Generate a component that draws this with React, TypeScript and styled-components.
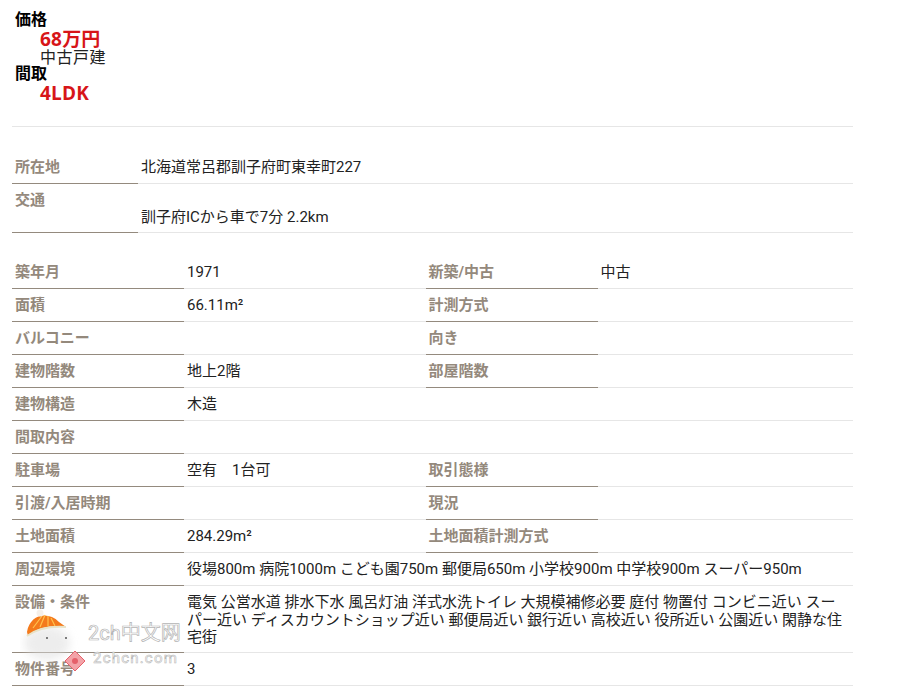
import React from 'react';
import styled, { createGlobalStyle } from 'styled-components';

const Global = createGlobalStyle`
  html, body { margin: 0; padding: 0; background: #fff; }
  body { font-family: Roboto, "Noto Sans CJK JP", sans-serif; font-size: 15px; color: #222; overflow: hidden; }
`;
const Page = styled.div`
  position: relative; width: 908px; height: 693px; overflow: hidden; padding: 0 55px 0 12px; box-sizing: border-box;
`;
const Summary = styled.dl`
  margin: 0; padding: 11px 0 0 3px; border-bottom: 1px solid #e6e6e6; height: 127px; box-sizing: border-box;
`;
const Term = styled.dt<{ $gap?: number }>`
  font-size: 16px; font-weight: 700; line-height: 18px; color: #000; margin-top: ${p => p.$gap ?? 0}px;
`;
const Big = styled.dd`
  margin: 0 0 0 25px; font-family: "Open Sans", "Noto Sans CJK JP", sans-serif; font-size: 19px; font-weight: 700;
  line-height: 21px; color: #d71518; letter-spacing: 0.2px;
`;
const Kind = styled.div`
  margin: -2px 0 0 25px; font-size: 16px; line-height: 19px; color: #222; letter-spacing: 0.5px;
`;
const Section = styled.div<{ $top: number }>`
  margin-top: ${p => p.$top}px;
`;
const Row = styled.div<{ $h: number }>`
  display: flex; height: ${p => p.$h}px; box-sizing: border-box; border-bottom: 1px solid #e6e6e6;
`;
const Label = styled.div<{ $w: number }>`
  width: ${p => p.$w}px; flex: none; box-sizing: border-box; height: calc(100% + 1px);
  border-bottom: 1px solid #948a7e; padding: 5.5px 0 0 3px;
  font-size: 15px; line-height: 20px; font-weight: 700; color: #94897c; white-space: nowrap;
`;
const Value = styled.div<{ $w?: number; $pad?: number }>`
  ${p => (p.$w ? `width: ${p.$w}px; flex: none;` : 'flex: 1;')}
  box-sizing: border-box; padding: ${p => p.$pad ?? 5.5}px 0 0 3px; font-size: 15px; line-height: 20px; color: #222; white-space: pre-wrap;
`;
const Wrapped = styled(Value)`
  line-height: 17.5px; padding-top: 8px; padding-right: 4px;
`;
const Watermark = styled.div`
  position: absolute; left: 20px; top: 605px; width: 170px; height: 70px; pointer-events: none;
`;
const WmArt = styled.svg`
  position: absolute; left: 0; top: 0;
`;
const WmTitle = styled.span`
  position: absolute; left: 68px; top: 16px; font-size: 20px; line-height: 24px; font-weight: 400; white-space: nowrap;
  color: #fff; -webkit-text-stroke: 0.7px #b4b4b4;
`;
const WmSub = styled.span`
  position: absolute; left: 73px; top: 46px; font-size: 15px; line-height: 15px; white-space: nowrap; letter-spacing: 1.2px;
  color: #fff; -webkit-text-stroke: 0.6px #b9b9b9;
`;

type Cell = [string, string];
const rows: { a: Cell; b?: Cell }[] = [
  { a: ['築年月', '1971'], b: ['新築/中古', '中古'] },
  { a: ['面積', '66.11m²'], b: ['計測方式', ''] },
  { a: ['バルコニー', ''], b: ['向き', ''] },
  { a: ['建物階数', '地上2階'], b: ['部屋階数', ''] },
  { a: ['建物構造', '木造'] },
  { a: ['間取内容', ''] },
  { a: ['駐車場', '空有　1台可'], b: ['取引態様', ''] },
  { a: ['引渡/入居時期', ''], b: ['現況', ''] },
  { a: ['土地面積', '284.29m²'], b: ['土地面積計測方式', ''] },
  { a: ['周辺環境', '役場800m 病院1000m こども園750m 郵便局650m 小学校900m 中学校900m スーパー950m'] },
];

export default function App() {
  return (
    <Page>
      <Global />
      <Summary>
        <Term>価格</Term>
        <Big>68万円</Big>
        <Kind>中古戸建</Kind>
        <Term $gap={-2}>間取</Term>
        <Big>4LDK</Big>
      </Summary>
      <Section $top={24}>
        <Row $h={33}>
          <Label $w={126}>所在地</Label>
          <Value>北海道常呂郡訓子府町東幸町227</Value>
        </Row>
        <Row $h={49}>
          <Label $w={126}>交通</Label>
          <Value $pad={23}>訓子府ICから車で7分 2.2km</Value>
        </Row>
      </Section>
      <Section $top={23}>
        {rows.map(r => (
          <Row key={r.a[0]} $h={33}>
            <Label $w={172}>{r.a[0]}</Label>
            {r.b ? <Value $w={241.5}>{r.a[1]}</Value> : <Value>{r.a[1]}</Value>}
            {r.b && <Label $w={172}>{r.b[0]}</Label>}
            {r.b && <Value>{r.b[1]}</Value>}
          </Row>
        ))}
        <Row $h={67}>
          <Label $w={172}>設備・条件</Label>
          <Wrapped>電気 公営水道 排水下水 風呂灯油 洋式水洗トイレ 大規模補修必要 庭付 物置付 コンビニ近い スーパー近い ディスカウントショップ近い 郵便局近い 銀行近い 高校近い 役所近い 公園近い 閑静な住宅街</Wrapped>
        </Row>
        <Row $h={33}>
          <Label $w={172}>物件番号</Label>
          <Value>3</Value>
        </Row>
      </Section>
      <Watermark>
        <WmArt width="70" height="70" viewBox="0 0 70 70">
          <defs>
            <filter id="wmBlur" x="-30%" y="-30%" width="160%" height="160%">
              <feGaussianBlur stdDeviation="4" />
            </filter>
          </defs>
          <ellipse cx="27" cy="38" rx="23" ry="17" fill="#dcdcdc" opacity="0.5" filter="url(#wmBlur)" />
          <g transform="translate(0 3)">
            <path d="M7 24 C10 6 28 3 39 14 L46 19 C32 17 18 19 8 28 Z" fill="#f47a1c" />
            <path d="M13 20 L22 8 M20 19 L25 7 M28 18 L28 8 M35 18 L31 10" stroke="#ffc14d" strokeWidth="1.2" fill="none" />
            <path d="M7 28 C18 20 32 18 46 19" stroke="#e8e3c8" strokeWidth="2" fill="none" />
            <circle cx="20" cy="5" r="3.5" fill="#f5f0ea" />
          </g>
          <circle cx="27" cy="33" r="1" fill="#555" />
          <circle cx="46" cy="33" r="1" fill="#555" />
          <path d="M55 46 L65 56 L55 66 L45 56 Z" fill="#f3a3a8" stroke="#e5606a" strokeWidth="1" />
          <circle cx="55" cy="56" r="3" fill="#e5606a" />
        </WmArt>
        <WmTitle>2ch中文网</WmTitle>
        <WmSub>2chcn.com</WmSub>
      </Watermark>
    </Page>
  );
}
